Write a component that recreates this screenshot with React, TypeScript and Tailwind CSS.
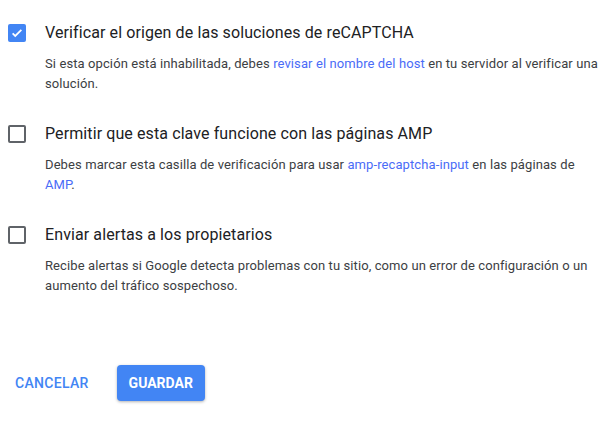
import React from "react";

const font = { fontFamily: "Roboto, 'Open Sans', sans-serif" };

function Box({ checked }: { checked?: boolean }) {
  return checked ? (
    <div className="w-[18px] h-[18px] rounded-[2px] bg-[#4285f4] flex items-center justify-center shrink-0">
      <svg width="14" height="14" viewBox="0 0 24 24">
        <path d="M4.5 12.5l4.5 4.5 10.5-10.5" fill="none" stroke="white" strokeWidth="3" />
      </svg>
    </div>
  ) : (
    <div className="w-[18px] h-[18px] rounded-[2px] border-2 border-[#5f6368] shrink-0" />
  );
}

function Item({
  checked,
  title,
  children,
}: {
  checked?: boolean;
  title: string;
  children: React.ReactNode;
}) {
  return (
    <div className="flex">
      <div className="w-[45px] pl-[8px] pt-[3px] shrink-0">
        <Box checked={checked} />
      </div>
      <div className="flex-1 pr-[4px]">
        <div className="text-[16px] leading-[24px] text-[#202124] tracking-[0.1px]">{title}</div>
        <div className="mt-[9px] text-[13px] leading-[20px] text-[#3c4043] tracking-[0.1px]">{children}</div>
      </div>
    </div>
  );
}

const L = ({ children }: { children: React.ReactNode }) => (
  <span className="text-[#4a6cf7]">{children}</span>
);

export default function App() {
  return (
    <div className="w-[606px] h-[428px] bg-white" style={font}>
      <div className="pt-[21px] flex flex-col gap-[28px]">
        <Item checked title="Verificar el origen de las soluciones de reCAPTCHA">
          Si esta opción está inhabilitada, debes <L>revisar el nombre del host</L> en tu servidor al verificar una
          solución.
        </Item>
        <Item title="Permitir que esta clave funcione con las páginas AMP">
          Debes marcar esta casilla de verificación para usar <L>amp-recaptcha-input</L> en las páginas de{" "}
          <L>AMP</L>.
        </Item>
        <Item title="Enviar alertas a los propietarios">
          Recibe alertas si Google detecta problemas con tu sitio, como un error de configuración o un aumento del
          tráfico sospechoso.
        </Item>
      </div>
      <div className="mt-[69px] flex items-center pl-[15px] gap-[28px]">
        <button className="text-[14px] font-medium text-[#4285f4] tracking-[0.3px]">CANCELAR</button>
        <button className="h-[36px] px-[12px] rounded-[4px] bg-[#4285f4] text-white text-[14px] font-bold shadow-[0_1px_3px_rgba(0,0,0,0.3)]">
          GUARDAR
        </button>
      </div>
    </div>
  );
}
